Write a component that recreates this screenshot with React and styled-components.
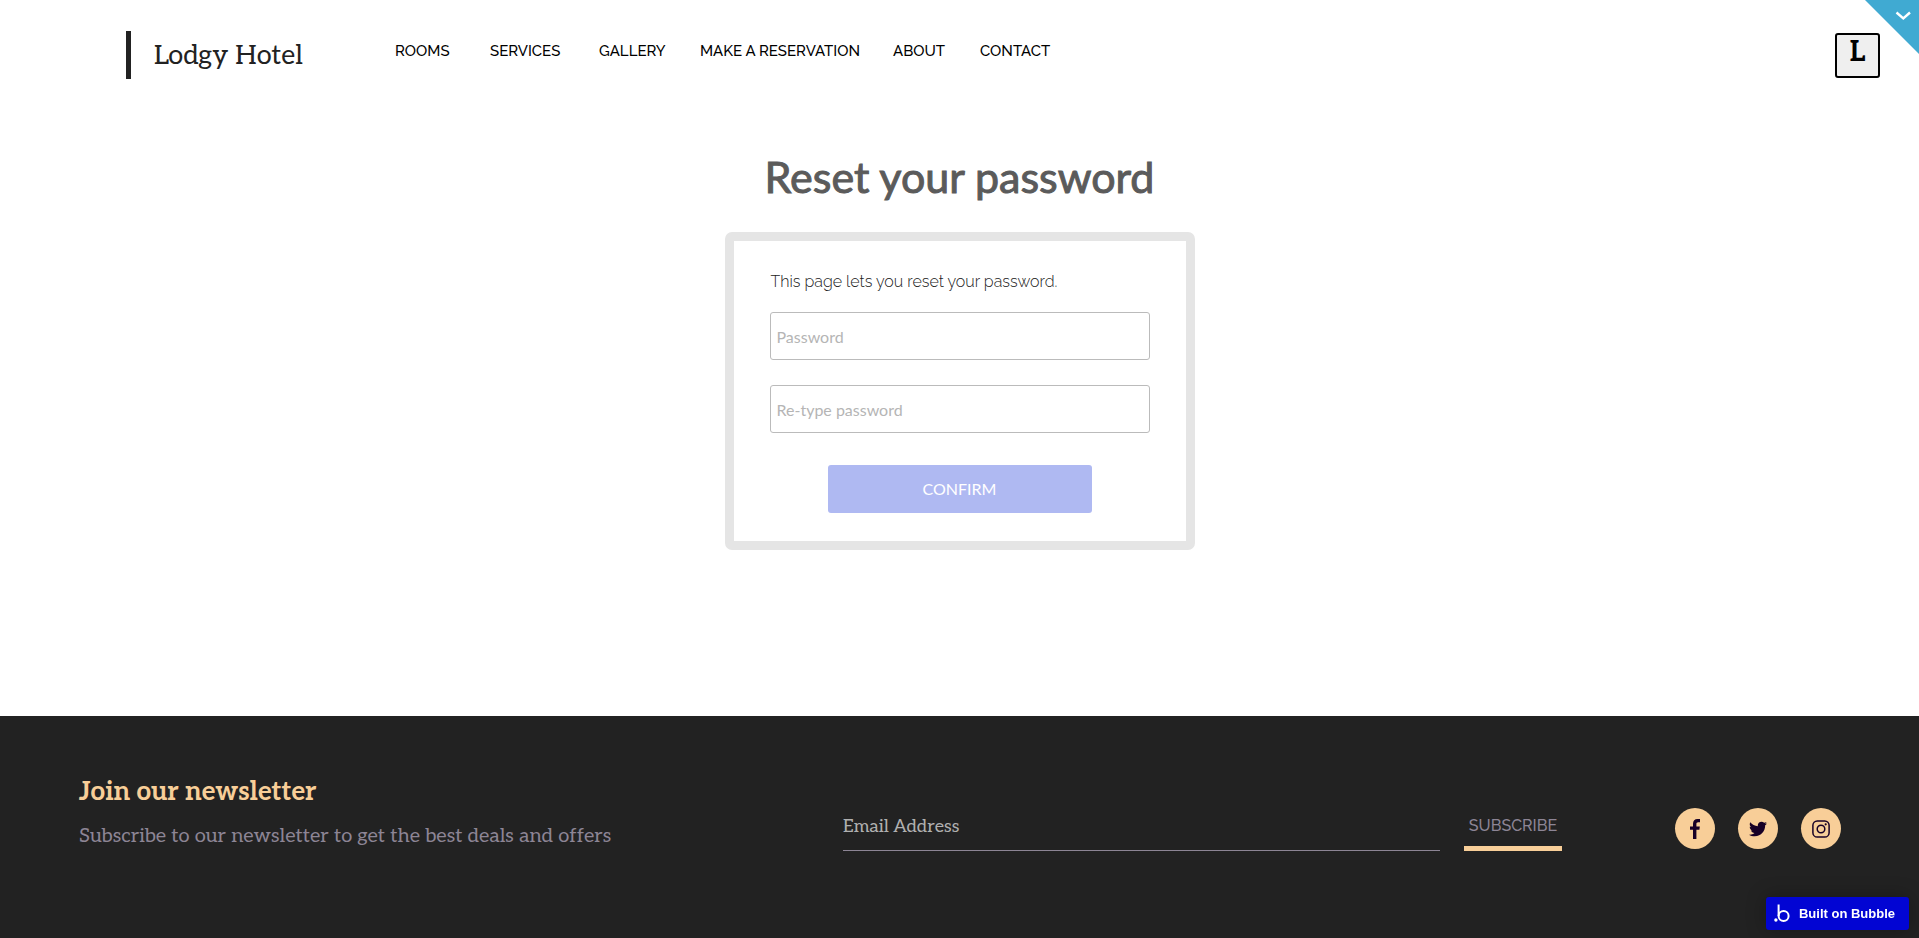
import React, { useState } from 'react';
import styled, { createGlobalStyle } from 'styled-components';
import { FaTwitter } from 'react-icons/fa';

const navLinks = [
  { label: 'ROOMS', width: 95 },
  { label: 'SERVICES', width: 109 },
  { label: 'GALLERY', width: 101 },
  { label: 'MAKE A RESERVATION', width: 193 },
  { label: 'ABOUT', width: 87 },
  { label: 'CONTACT', width: 80 },
];

const FacebookIcon = () => (
  <svg width="10" height="20" viewBox="0 0 10 20" fill="currentColor">
    <path d="M3 20V10.8H0V7.4H3V4.8C3 1.6 4.7 0 7.5 0H10V3.3H8.2C6.8 3.3 6.4 4 6.4 5.1V7.4H9.8L9.4 10.8H6.4V20Z" />
  </svg>
);

const InstagramIcon = () => (
  <svg width="18" height="18" viewBox="0 0 18 18" fill="none" stroke="currentColor" strokeWidth="1.5">
    <rect x="0.9" y="0.9" width="16.2" height="16.2" rx="4.4" />
    <circle cx="9" cy="9" r="3.8" />
    <circle cx="13.7" cy="4.3" r="1.1" fill="currentColor" stroke="none" />
  </svg>
);

const App = () => {
  const [password, setPassword] = useState('');
  const [confirmation, setConfirmation] = useState('');
  const [email, setEmail] = useState('');

  return (
    <Page>
      <GlobalStyle />

      <Header>
        <Brand href="#">Lodgy Hotel</Brand>
        <Nav>
          {navLinks.map(({ label, width }) => (
            <NavItem key={label} $width={width}>
              <NavLink href="#">{label}</NavLink>
            </NavItem>
          ))}
        </Nav>
        <LetterButton type="button">L</LetterButton>
      </Header>

      <Corner type="button" aria-label="Open menu">
        <svg width="54" height="54" viewBox="0 0 54 54">
          <path d="M0 0H54V54Z" fill="#40aad2" />
          <path
            d="M31.5 12.5L38.3 18.5L45 12.5"
            fill="none"
            stroke="#fff"
            strokeWidth="2.4"
          />
        </svg>
      </Corner>

      <Main>
        <Title>Reset your password</Title>
        <Card onSubmit={(e) => e.preventDefault()}>
          <Intro>This page lets you reset your password.</Intro>
          <PasswordInput
            type="password"
            aria-label="Password"
            placeholder="Password"
            value={password}
            onChange={(e) => setPassword(e.target.value)}
          />
          <PasswordInput
            type="password"
            aria-label="Re-type password"
            placeholder="Re-type password"
            value={confirmation}
            onChange={(e) => setConfirmation(e.target.value)}
          />
          <ConfirmButton type="submit">CONFIRM</ConfirmButton>
        </Card>
      </Main>

      <Footer>
        <Newsletter>
          <NewsletterTitle>Join our newsletter</NewsletterTitle>
          <NewsletterText>
            Subscribe to our newsletter to get the best deals and offers
          </NewsletterText>
        </Newsletter>
        <SubscribeForm onSubmit={(e) => e.preventDefault()}>
          <EmailInput
            type="email"
            aria-label="Email Address"
            placeholder="Email Address"
            value={email}
            onChange={(e) => setEmail(e.target.value)}
          />
          <SubscribeButton type="submit">SUBSCRIBE</SubscribeButton>
        </SubscribeForm>
        <Socials>
          <SocialLink href="#" aria-label="Facebook">
            <FacebookIcon />
          </SocialLink>
          <SocialLink href="#" aria-label="Twitter">
            <FaTwitter size={18} />
          </SocialLink>
          <SocialLink href="#" aria-label="Instagram">
            <InstagramIcon />
          </SocialLink>
        </Socials>
      </Footer>

      <BubbleBadge href="#">
        <svg width="16" height="19" viewBox="0 0 16 19">
          <circle cx="1.9" cy="16" r="1.7" fill="#fff" />
          <circle cx="9.6" cy="11.9" r="5" fill="none" stroke="#fff" strokeWidth="2" />
          <path d="M4.6 0.5V12" stroke="#fff" strokeWidth="2" />
        </svg>
        Built on Bubble
      </BubbleBadge>
    </Page>
  );
};

const slab = "Aleo, 'Noto Serif', 'Liberation Serif', serif";
const sans = "Raleway, Lato, 'Open Sans', sans-serif";

const GlobalStyle = createGlobalStyle`
  * {
    box-sizing: border-box;
  }

  body {
    margin: 0;
    background: #fff;
  }

  button,
  input {
    border-radius: 0;
    margin: 0;
  }
`;

const Page = styled.div`
  display: flex;
  flex-direction: column;
  min-height: 100vh;
  position: relative;
`;

const Header = styled.header`
  display: flex;
  align-items: flex-start;
  padding: 31px 39px 0 126px;
`;

const Brand = styled.a`
  width: 269px;
  flex-shrink: 0;
  height: 48px;
  padding-left: 23px;
  border-left: 5px solid #222;
  color: #222;
  font: 27px/50px ${slab};
  text-decoration: none;
`;

const Nav = styled.nav`
  display: flex;
  flex: 1;
  padding-top: 10px;
`;

const NavItem = styled.span`
  width: ${(props) => props.$width}px;
`;

const NavLink = styled.a`
  color: #000;
  font: 500 15px/20px ${sans};
  text-decoration: none;
  white-space: nowrap;
`;

const LetterButton = styled.button`
  width: 45px;
  height: 45px;
  margin-top: 2px;
  padding: 0 0 6px;
  border: 2px solid #000;
  border-radius: 3px;
  background: #efefef;
  color: #000;
  font: bold 28px/32px ${slab};
  cursor: pointer;
`;

const Corner = styled.button`
  position: absolute;
  top: 0;
  right: 0;
  padding: 0;
  border: 0;
  background: transparent;
  cursor: pointer;

  svg {
    display: block;
  }
`;

const Main = styled.main`
  display: flex;
  flex-direction: column;
  align-items: center;
  flex: 1;
  padding: 71px 20px 166px;
`;

const Title = styled.h1`
  margin: 0 0 28px;
  color: #5b5b5b;
  font: 400 43px/54px Lato, sans-serif;
  -webkit-text-stroke: 1px #5b5b5b;
`;

const Card = styled.form`
  display: flex;
  flex-direction: column;
  width: 470px;
  max-width: 100%;
  padding: 29px 36px 28px;
  border: 9px solid #e5e5e5;
  border-radius: 7px;
  background: #fff;
`;

const Intro = styled.p`
  margin: 0 0 18px;
  padding-left: 1px;
  color: #222;
  font: 300 16px/24px ${sans};
`;

const PasswordInput = styled.input`
  height: 48px;
  margin-bottom: 25px;
  padding: 0 6px;
  border: 1px solid #bbb;
  border-radius: 3px;
  color: #3d3d3d;
  font: 16px/20px Lato, sans-serif;

  &::placeholder {
    color: #b5b5b5;
  }
`;

const ConfirmButton = styled.button`
  align-self: center;
  width: 264px;
  height: 48px;
  margin-top: 7px;
  border: 0;
  border-radius: 3px;
  background: #afb9f2;
  color: #fff;
  font: 16px/20px Lato, sans-serif;
  cursor: pointer;
`;

const Footer = styled.footer`
  display: flex;
  align-items: flex-start;
  min-height: 222px;
  padding: 58px 78px 0 79px;
  background: #222;
`;

const Newsletter = styled.div`
  flex: 764;
`;

const NewsletterTitle = styled.h2`
  margin: 0 0 10px;
  color: #f8ce98;
  font: bold 26px/36px ${slab};
`;

const NewsletterText = styled.p`
  margin: 0;
  color: #8d8595;
  font: 20px/32px ${slab};
`;

const SubscribeForm = styled.form`
  display: flex;
  flex: 719;
  gap: 24px;
  padding-top: 29px;
`;

const EmailInput = styled.input`
  flex: 1;
  min-width: 0;
  height: 48px;
  padding: 0;
  border: 0;
  border-bottom: 1px solid #8d8595;
  outline: 0;
  background: transparent;
  color: #b0b0b0;
  font: 18px/24px ${slab};

  &::placeholder {
    color: #b0b0b0;
  }
`;

const SubscribeButton = styled.button`
  width: 98px;
  height: 48px;
  padding: 2px 0 0;
  border: 0;
  border-bottom: 5px solid #f8ce98;
  background: transparent;
  color: #8d8595;
  font: 500 16px/20px ${sans};
  cursor: pointer;
`;

const Socials = styled.div`
  display: flex;
  gap: 23px;
  margin-left: 113px;
  padding-top: 34px;
`;

const SocialLink = styled.a`
  display: flex;
  align-items: center;
  justify-content: center;
  width: 40px;
  height: 41px;
  border-radius: 50%;
  background: #f8ce98;
  color: #180026;
`;

const BubbleBadge = styled.a`
  position: fixed;
  right: 10px;
  bottom: 8px;
  display: flex;
  align-items: center;
  gap: 9px;
  height: 33px;
  padding: 0 14px 0 8px;
  border-radius: 3px;
  background: #0205d3;
  box-shadow: 0 0 20px rgba(0, 0, 0, .3);
  color: #fff;
  font: bold 13px/20px 'Liberation Sans', Arial, sans-serif;
  text-decoration: none;
`;

export default App;
